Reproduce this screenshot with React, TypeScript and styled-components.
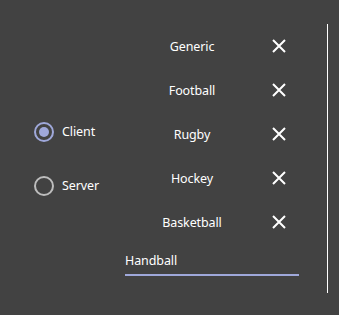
import React, { useState } from "react";
import styled, { createGlobalStyle } from "styled-components";

const Global = createGlobalStyle`
  html, body { margin: 0; padding: 0; background: #424242; }
  body { font-family: "Noto Sans", "Open Sans", sans-serif; }
`;

const Page = styled.div`
  width: 339px;
  height: 315px;
  background: #424242;
  color: #ffffff;
  display: flex;
  align-items: stretch;
  padding: 24px 0 22px 0;
  box-sizing: border-box;
  font-size: 12.5px;
  letter-spacing: -0.1px;
`;

const LeftColumn = styled.div`
  width: 125px;
  padding-left: 34px;
  box-sizing: border-box;
  display: flex;
  flex-direction: column;
  justify-content: center;
  gap: 34px;
`;

const RadioRow = styled.label`
  display: flex;
  align-items: center;
  gap: 8px;
  height: 20px;
  cursor: pointer;
`;

const RadioCircle = styled.span<{ $checked: boolean }>`
  width: 20px;
  height: 20px;
  box-sizing: border-box;
  border-radius: 50%;
  border: 2px solid ${(p) => (p.$checked ? "#9fa8da" : "#bdbdbd")};
  display: flex;
  align-items: center;
  justify-content: center;
  &::after {
    content: "";
    width: 10px;
    height: 10px;
    border-radius: 50%;
    background: #9fa8da;
    display: ${(p) => (p.$checked ? "block" : "none")};
  }
`;

const ListColumn = styled.div`
  width: 174px;
  display: flex;
  flex-direction: column;
`;

const ItemRow = styled.div`
  display: flex;
  align-items: center;
  height: 44px;
`;

const ItemLabel = styled.div`
  width: 134px;
  text-align: center;
`;

const RemoveButton = styled.button`
  width: 40px;
  height: 40px;
  padding: 0;
  border: none;
  background: transparent;
  display: flex;
  align-items: center;
  justify-content: center;
  cursor: pointer;
`;

const InputField = styled.input`
  margin-top: 6px;
  width: 174px;
  height: 26px;
  box-sizing: border-box;
  background: transparent;
  border: none;
  border-bottom: 2px solid #9fa8da;
  color: #ffffff;
  font: inherit;
  letter-spacing: inherit;
  padding: 0 0 3px 0;
  outline: none;
`;

const Divider = styled.div`
  width: 1px;
  margin-left: 28px;
  background: #ffffff;
`;

const CloseIcon = () => (
  <svg width="14" height="14" viewBox="0 0 14 14">
    <path d="M1 1 L13 13 M13 1 L1 13" stroke="#ffffff" strokeWidth="2" strokeLinecap="butt" />
  </svg>
);

export default function App() {
  const [mode, setMode] = useState("Client");
  const [items, setItems] = useState(["Generic", "Football", "Rugby", "Hockey", "Basketball"]);
  const [text, setText] = useState("Handball");
  return (
    <>
      <Global />
      <Page>
        <LeftColumn>
          {["Client", "Server"].map((m) => (
            <RadioRow key={m} onClick={() => setMode(m)}>
              <RadioCircle $checked={mode === m} />
              {m}
            </RadioRow>
          ))}
        </LeftColumn>
        <ListColumn>
          {items.map((it) => (
            <ItemRow key={it}>
              <ItemLabel>{it}</ItemLabel>
              <RemoveButton onClick={() => setItems(items.filter((x) => x !== it))}>
                <CloseIcon />
              </RemoveButton>
            </ItemRow>
          ))}
          <InputField value={text} onChange={(e) => setText(e.target.value)} />
        </ListColumn>
        <Divider />
      </Page>
    </>
  );
}
